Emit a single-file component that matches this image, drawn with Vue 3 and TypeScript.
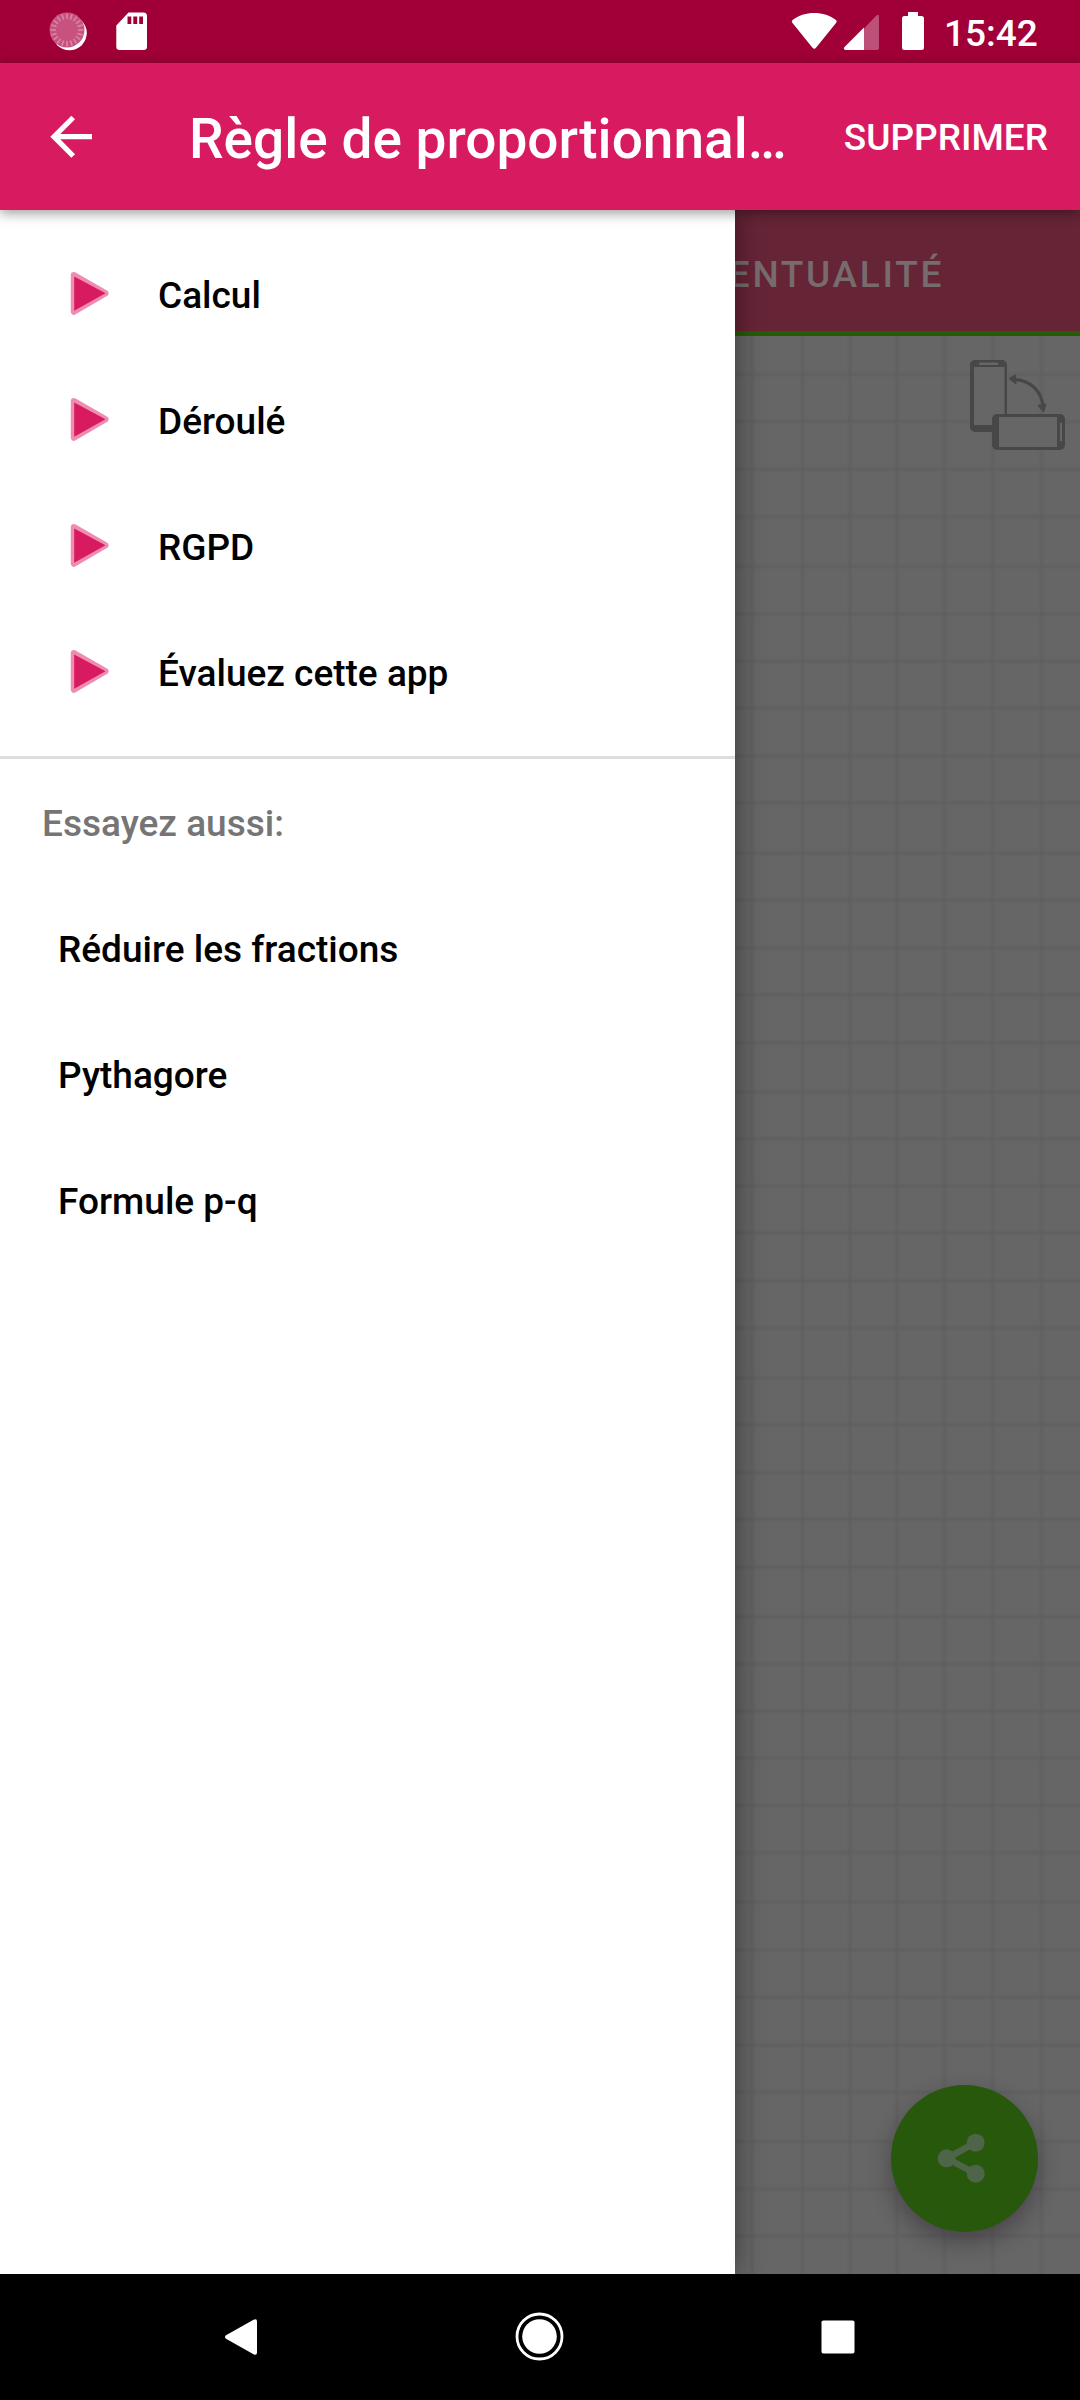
<script setup lang="ts">
interface Entry {
  label: string
}

const tools: Entry[] = [
  { label: 'Calcul' },
  { label: 'Déroulé' },
  { label: 'RGPD' },
  { label: 'Évaluez cette app' },
]

const otherApps: Entry[] = [
  { label: 'Réduire les fractions' },
  { label: 'Pythagore' },
  { label: 'Formule p-q' },
]

// Squared-paper rulings, relative to the paper's top left corner
const columns: number[] = [752, 802.5, 850, 897, 944.3, 992.5, 1041.5]
const rows: number[] = [
  38.5, 85.5, 133, 180.5, 230.5, 278, 325, 372, 420, 467, 517, 564, 612, 659, 707, 756, 803, 850,
  897, 945, 992, 1042, 1088.5, 1136.5, 1183, 1231, 1281, 1328, 1375, 1422, 1469.5, 1516.5, 1566,
  1614, 1661, 1709, 1756.3, 1805.7, 1852.7, 1900,
]
const ticks: number[] = Array.from({ length: 20 }, (_, i) => i * 18)
</script>

<template>
  <div class="screen">
    <header class="status">
      <div class="status-left">
        <svg width="40" height="42" viewBox="47 10 40 42">
          <circle cx="69.5" cy="33" r="17.3" fill="#fff" />
          <circle cx="67" cy="30" r="17.5" fill="#c7527f" />
          <line
            v-for="t in ticks"
            :key="t"
            x1="67"
            y1="13.5"
            x2="67"
            y2="19"
            stroke="#d987a6"
            stroke-width="1.6"
            :transform="`rotate(${t} 67 30)`"
          />
        </svg>
        <svg width="32" height="42" viewBox="116 10 32 42">
          <path
            fill="#fff"
            fill-rule="evenodd"
            d="M128.5 12.5H143.5Q147 12.5 147 16V46.700Q147 50 143.500 50H119.700Q116.300 50 116.300 46.700V25.500ZM127.500 16.500V24H131.300V16.500ZM133.300 16.500V24H137.200V16.500ZM139.200 16.500V24H143V16.500Z"
          />
        </svg>
      </div>
      <div class="status-right">
        <svg width="134" height="42" viewBox="791 10 134 42">
          <path
            fill="#fff"
            d="M792.300 22.800Q791 21.300 792.600 20C804 10.600 824.500 10.600 836 20Q837.400 21.200 836.200 22.700L816 47.700Q814.300 49.800 812.500 47.700Z"
          />
          <path fill="#bd5078" d="M864 28.500L876.300 15.600Q879 13.500 879 16.500V48Q879 50 877 50H864Z" />
          <path fill="#fff" d="M864 27.500V50H845.500Q842.800 49.400 844.500 47Z" />
          <path
            fill="#fff"
            d="M908 12H918V16H921.500Q924 16 924 18.500V47.500Q924 50 921.500 50H904.500Q902 50 902 47.500V18.500Q902 16 904.500 16H908Z"
          />
        </svg>
        <span class="clock">15:42</span>
      </div>
    </header>

    <div class="appbar">
      <svg class="back" width="44" height="44" viewBox="50 114 44 44">
        <path
          d="M92 135.700H54M73.200 116.500L54 135.700L73.200 155"
          fill="none"
          stroke="#fff"
          stroke-width="5.200"
        />
      </svg>
      <h1 class="title">Règle de proportionnal…</h1>
      <span class="action">SUPPRIMER</span>
    </div>

    <main class="body">
      <div class="tabs"><span>ENTUALITÉ</span></div>
      <div class="paper">
        <svg width="1080" height="1938" viewBox="0 0 1080 1938">
          <g stroke="#5d5d5d" stroke-width="6" stroke-opacity="0.15">
            <line v-for="x in columns" :key="`cw${x}`" :x1="x" y1="0" :x2="x" y2="1938" />
            <line v-for="y in rows" :key="`rw${y}`" x1="0" :y1="y" x2="1080" :y2="y" />
          </g>
          <g stroke="#5d5d5d" stroke-width="2.500" stroke-opacity="0.3">
            <line v-for="x in columns" :key="`c${x}`" :x1="x" y1="0" :x2="x" y2="1938" />
            <line v-for="y in rows" :key="`r${y}`" x1="0" :y1="y" x2="1080" :y2="y" />
          </g>
        </svg>
        <svg class="rotate" width="100" height="94" viewBox="968 358 100 94">
          <rect x="970" y="360" width="37" height="72" rx="5" fill="#474747" />
          <rect x="974" y="367" width="30.500" height="58" fill="#666" />
          <rect x="979" y="362.500" width="19.500" height="2.500" rx="1" fill="#666" />
          <rect x="992" y="414" width="73" height="36" rx="5" fill="#474747" />
          <rect x="999" y="417" width="58" height="30" fill="#666" />
          <rect x="1060" y="422.500" width="2" height="19" rx="1" fill="#666" />
          <path d="M1014 379.500C1030 380 1042 391 1043 407" fill="none" stroke="#474747" stroke-width="3.200" />
          <path d="M1009 378.500L1015.500 374.800L1016 384Z" fill="#474747" stroke="#474747" stroke-linejoin="round" />
          <path d="M1043.500 412L1038 405.500L1046 404Z" fill="#474747" stroke="#474747" stroke-linejoin="round" />
        </svg>
        <div class="fab">
          <svg width="50" height="52" viewBox="936 2132 50 52">
            <g fill="#4f654a" stroke="none">
              <circle cx="946.700" cy="2158.300" r="9" />
              <circle cx="975.700" cy="2142.700" r="9" />
              <circle cx="975.700" cy="2173.700" r="9" />
            </g>
            <path d="M975.700 2142.700L946.700 2158.300L975.700 2173.700" fill="none" stroke="#4f654a" stroke-width="6.500" />
          </svg>
        </div>
      </div>

      <nav class="drawer">
        <ul class="list">
          <li v-for="item in tools" :key="item.label" class="row">
            <svg width="42" height="46" viewBox="70 270 42 46">
              <path
                d="M74 275.300L105.300 293.300L74 311.500Z"
                fill="#ee8db1"
                stroke="#ee8db1"
                stroke-width="6.500"
                stroke-linejoin="round"
              />
              <path d="M74.200 276.400L105.500 293.300L74.200 310.800Z" fill="#d81b60" />
            </svg>
            <span>{{ item.label }}</span>
          </li>
        </ul>
        <div class="divider"></div>
        <div class="heading">Essayez aussi:</div>
        <ul class="list">
          <li v-for="item in otherApps" :key="item.label" class="row plain">{{ item.label }}</li>
        </ul>
      </nav>
    </main>

    <footer class="navbar">
      <svg width="34" height="38" viewBox="224 2318 34 38">
        <path d="M226 2335.300L253.500 2319.800Q257 2318 257 2321.500V2352.500Q257 2356 253.500 2354.300L226 2338.800Q224 2337 226 2335.300Z" fill="#fff" />
      </svg>
      <svg width="50" height="50" viewBox="0.500 0.500 50 50">
        <circle cx="25" cy="25" r="22.500" fill="none" stroke="#fff" stroke-width="2.800" />
        <circle cx="25" cy="25" r="17.300" fill="#fff" />
      </svg>
      <svg width="34" height="34" viewBox="0 0 34 34">
        <rect x="0.500" y="0.500" width="33" height="33" rx="1.800" fill="#fff" />
      </svg>
    </footer>
  </div>
</template>

<style>
body {
  margin: 0;
}
</style>

<style scoped>
.screen {
  width: 1080px;
  height: 2400px;
  display: flex;
  flex-direction: column;
  overflow: hidden;
  background: #000;
  font-family: Roboto, sans-serif;
  font-weight: 500;
  font-size: 37px;
}

svg {
  display: block;
  flex: none;
}

.status {
  height: 63px;
  flex: none;
  box-sizing: border-box;
  padding: 10px 42px 0 47px;
  display: flex;
  justify-content: space-between;
  background: #a00037;
}

.status-left {
  display: flex;
  gap: 29px;
}

.status-right {
  display: flex;
  gap: 19px;
}

.clock {
  color: #fff;
  font-size: 37px;
  line-height: 47px;
  width: 94px;
  white-space: nowrap;
}

.appbar {
  position: relative;
  z-index: 2;
  height: 147px;
  flex: none;
  box-sizing: border-box;
  padding: 0 32px 0 50px;
  display: flex;
  align-items: center;
  background: #d81b60;
  color: #fff;
  box-shadow: 0 3px 12px rgba(0, 0, 0, 0.4);
}

.title {
  margin: 0 auto 0 95px;
  font-size: 55px;
  font-weight: 500;
  line-height: 64px;
  white-space: nowrap;
  padding-top: 4px;
}

.action {
  white-space: nowrap;
  padding-top: 1px;
}

.body {
  position: relative;
  height: 2064px;
  flex: none;
  display: flex;
  flex-direction: column;
  overflow: hidden;
}

.tabs {
  height: 126px;
  flex: none;
  box-sizing: border-box;
  border-bottom: 5px solid #275b06;
  background: #662437;
  color: #776b6e;
  display: flex;
  justify-content: flex-end;
  align-items: center;
  padding: 7px 136px 0 0;
  letter-spacing: 2.7px;
}

.paper {
  position: relative;
  flex: 1;
  background: #666;
}

.rotate {
  position: absolute;
  left: 968px;
  top: 22px;
}

.fab {
  position: absolute;
  left: 891px;
  top: 1749px;
  width: 147px;
  height: 147px;
  box-sizing: border-box;
  padding: 0 7px 1px 0;
  border-radius: 50%;
  background: #27580b;
  display: flex;
  align-items: center;
  justify-content: center;
  box-shadow: 0 10px 22px rgba(40, 32, 40, 0.45);
}

.drawer {
  position: absolute;
  left: 0;
  top: 0;
  width: 735px;
  height: 100%;
  box-sizing: border-box;
  padding-top: 20px;
  background: #fff;
  color: #000;
  box-shadow: 0 0 26px rgba(0, 0, 0, 0.45);
}

.list {
  list-style: none;
  margin: 0;
  padding: 0;
}

.row {
  height: 126px;
  box-sizing: border-box;
  display: flex;
  align-items: center;
  gap: 46px;
  padding-left: 70px;
}

.row span {
  padding-top: 4px;
}

.plain {
  padding: 2px 0 0 58px;
}

.divider {
  height: 3px;
  margin-top: 22px;
  background: #dedede;
}

.heading {
  height: 126px;
  box-sizing: border-box;
  display: flex;
  align-items: center;
  padding: 2px 0 0 42px;
  color: #757575;
}

.navbar {
  height: 126px;
  flex: none;
  box-sizing: border-box;
  padding: 0 225px 0 224px;
  display: flex;
  align-items: center;
  justify-content: space-between;
}
</style>
